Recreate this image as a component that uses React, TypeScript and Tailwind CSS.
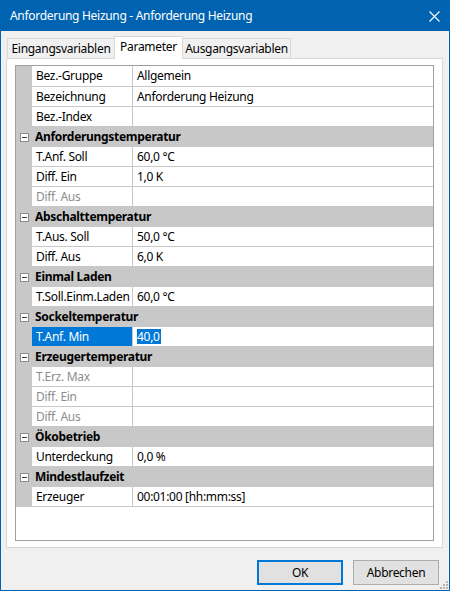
import React from "react";

type Row =
  | { kind: "cat"; name: string }
  | { kind: "row"; name: string; value: string; disabled?: boolean; selected?: boolean };

const rows: Row[] = [
  { kind: "row", name: "Bez.-Gruppe", value: "Allgemein" },
  { kind: "row", name: "Bezeichnung", value: "Anforderung Heizung" },
  { kind: "row", name: "Bez.-Index", value: "" },
  { kind: "cat", name: "Anforderungstemperatur" },
  { kind: "row", name: "T.Anf. Soll", value: "60,0 °C" },
  { kind: "row", name: "Diff. Ein", value: "1,0 K" },
  { kind: "row", name: "Diff. Aus", value: "", disabled: true },
  { kind: "cat", name: "Abschalttemperatur" },
  { kind: "row", name: "T.Aus. Soll", value: "50,0 °C" },
  { kind: "row", name: "Diff. Aus", value: "6,0 K" },
  { kind: "cat", name: "Einmal Laden" },
  { kind: "row", name: "T.Soll.Einm.Laden", value: "60,0 °C" },
  { kind: "cat", name: "Sockeltemperatur" },
  { kind: "row", name: "T.Anf. Min", value: "40,0", selected: true },
  { kind: "cat", name: "Erzeugertemperatur" },
  { kind: "row", name: "T.Erz. Max", value: "", disabled: true },
  { kind: "row", name: "Diff. Ein", value: "", disabled: true },
  { kind: "row", name: "Diff. Aus", value: "", disabled: true },
  { kind: "cat", name: "Ökobetrieb" },
  { kind: "row", name: "Unterdeckung", value: "0,0 %" },
  { kind: "cat", name: "Mindestlaufzeit" },
  { kind: "row", name: "Erzeuger", value: "00:01:00 [hh:mm:ss]" },
];

function MinusBox() {
  return (
    <svg width="9" height="9" viewBox="0 0 9 9" className="block">
      <rect x="0.5" y="0.5" width="8" height="8" fill="#ffffff" stroke="#8c8c8c" />
      <rect x="2" y="4" width="5" height="1" fill="#3c3c3c" />
    </svg>
  );
}

export default function App() {
  return (
    <div
      className="relative flex h-[591px] w-[450px] flex-col border border-[#0063b1] bg-[#f0f0f0] text-[12px] leading-none tracking-[-0.3px] text-black"
      style={{ fontFamily: '"Noto Sans", "Segoe UI", sans-serif' }}
    >
      {/* title bar */}
      <div className="flex h-[30px] shrink-0 items-center justify-between bg-[#0063b1] pl-[9px] pr-[9px] text-white">
        <span className="text-[12px]">Anforderung Heizung - Anforderung Heizung</span>
        <svg width="11" height="11" viewBox="0 0 11 11">
          <path d="M0.5 0.5 L10.5 10.5 M10.5 0.5 L0.5 10.5" stroke="#ffffff" strokeWidth="1.1" />
        </svg>
      </div>

      {/* tabs */}
      <div className="mt-[5px] flex h-[22px] shrink-0 items-end pl-[6px]">
        <div className="flex h-[20px] w-[108px] items-center justify-center border border-b-0 border-[#d9d9d9] bg-[#f0f0f0]">
          Eingangsvariablen
        </div>
        <div className="relative z-10 -mb-px -ml-px flex h-[23px] w-[69px] items-center justify-center border border-b-0 border-[#d9d9d9] bg-white pb-[2px]">
          Parameter
        </div>
        <div className="-ml-px flex h-[20px] w-[109px] items-center justify-center border border-b-0 border-[#d9d9d9] bg-[#f0f0f0]">
          Ausgangsvariablen
        </div>
      </div>

      {/* panel */}
      <div className="ml-[5px] h-[490px] w-[437px] shrink-0 border border-[#d9d9d9] bg-white">
        <div className="ml-[8px] mt-[6px] flex h-[476px] w-[419px] flex-col border border-[#a0a0a0] bg-white">
          {rows.map((r, i) =>
            r.kind === "cat" ? (
              <div key={i} className="flex h-[20px] shrink-0 items-center bg-[#c8c8c8]">
                <div className="ml-[4px] mr-[6px]">
                  <MinusBox />
                </div>
                <span className="font-bold">{r.name}</span>
              </div>
            ) : (
              <div key={i} className={`flex shrink-0 ${i === 0 ? "h-[21px]" : "h-[20px]"}`}>
                <div className="w-[16px] shrink-0 bg-[#c8c8c8]" />
                <div
                  className={`flex w-[101px] shrink-0 items-center border-b border-r border-[#c8c8c8] pl-[4px] ${
                    r.selected ? "bg-[#0078d7] text-white" : r.disabled ? "text-[#8d8d8d]" : ""
                  }`}
                >
                  {r.name}
                </div>
                <div className="flex flex-1 items-center border-b border-[#c8c8c8] pl-[4px]">
                  {r.selected ? (
                    <span className="flex h-[15px] items-center bg-[#0078d7] pr-px text-white">{r.value}</span>
                  ) : (
                    r.value
                  )}
                </div>
              </div>
            )
          )}
        </div>
      </div>

      {/* buttons */}
      <div className="mt-[12px] flex justify-end gap-[10px] pr-[10px]">
        <button className="flex h-[25px] w-[86px] items-center justify-center border-2 border-[#0078d7] bg-[#e1e1e1]">
          OK
        </button>
        <button className="flex h-[25px] w-[86px] items-center justify-center border border-[#adadad] bg-[#e1e1e1]">
          Abbrechen
        </button>
      </div>

      {/* resize grip */}
      <svg width="9" height="9" viewBox="0 0 9 9" className="absolute bottom-[1px] right-[1px]">
        <rect x="7" y="1" width="2" height="2" fill="#b4b4b4" />
        <rect x="4" y="4" width="2" height="2" fill="#b4b4b4" />
        <rect x="7" y="4" width="2" height="2" fill="#b4b4b4" />
        <rect x="1" y="7" width="2" height="2" fill="#b4b4b4" />
        <rect x="4" y="7" width="2" height="2" fill="#b4b4b4" />
        <rect x="7" y="7" width="2" height="2" fill="#b4b4b4" />
      </svg>
    </div>
  );
}
